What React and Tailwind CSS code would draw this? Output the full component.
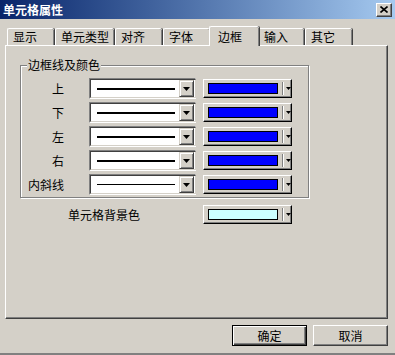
import React from "react";

const font = { fontFamily: '"Noto Sans CJK SC", "DejaVu Sans", sans-serif' };

function Arrow() {
  return (
    <svg width="7" height="4" viewBox="0 0 7 4" aria-hidden="true">
      <path d="M0 0h7L3.5 4z" fill="#000" />
    </svg>
  );
}

function LineCombo({ thin = false }) {
  return (
    <div className="flex h-[21px] w-[107px] border border-t-[#808080] border-l-[#808080] border-r-white border-b-white">
      <div className="flex flex-1 items-center border border-t-[#404040] border-l-[#404040] border-r-[#d4d0c8] border-b-[#d4d0c8] bg-white pr-[1px]">
        <div className="flex flex-1 items-center pl-[6px] pr-[4px]">
          <div className={thin ? "h-[1px] w-[78px] bg-black" : "h-[2px] w-[78px] bg-black"} />
        </div>
        <div className="flex h-[17px] w-[15px] items-center justify-center border border-t-[#d4d0c8] border-l-[#d4d0c8] border-r-[#404040] border-b-[#404040] bg-[#d4d0c8] shadow-[inset_1px_1px_0_#fff,inset_-1px_-1px_0_#808080]">
          <Arrow />
        </div>
      </div>
    </div>
  );
}

function ColorCombo({ color }) {
  return (
    <div className="flex h-[19px] w-[89px] items-center border border-t-white border-l-white border-r-black border-b-black bg-[#d4d0c8] shadow-[inset_-1px_-1px_0_#808080]">
      <div className={`ml-[4px] h-[11px] w-[70px] border border-black ${color}`} />
      <div className="ml-[4px] h-[13px] w-[2px] border-l border-r border-l-[#808080] border-r-white" />
      <div className="ml-[2px] flex items-center">
        <svg width="5" height="3" viewBox="0 0 5 3" aria-hidden="true">
          <path d="M0 0h5L2.5 3z" fill="#000" />
        </svg>
      </div>
    </div>
  );
}

function Tab({ label, width, active = false }) {
  if (active) {
    return (
      <div
        className={`relative z-10 -ml-[2px] -mr-[1px] -mb-[1px] flex h-[20px] items-start rounded-tl-[2px] rounded-tr-[2px] border-t border-l border-t-white border-l-white bg-[#d4d0c8] pl-[8px] pt-[2px] shadow-[1px_0_0_#404040,inset_-1px_0_0_#808080] ${width}`}
      >
        <span className="text-[12px] leading-[16px] text-black">{label}</span>
      </div>
    );
  }
  return (
    <div
      className={`mr-[1px] flex h-[17px] items-start rounded-tl-[2px] rounded-tr-[2px] border-t border-l border-t-white border-l-white bg-[#d4d0c8] pl-[5px] shadow-[1px_0_0_#404040,inset_-1px_0_0_#808080] ${width}`}
    >
      <span className="text-[12px] leading-[16px] text-black">{label}</span>
    </div>
  );
}

function Button({ label, primary = false }) {
  return (
    <div
      className={
        primary
          ? "flex h-[21px] w-[75px] items-center justify-center border border-black bg-[#d4d0c8] shadow-[inset_1px_1px_0_#fff,inset_-1px_-1px_0_#404040,inset_-2px_-2px_0_#808080]"
          : "flex h-[21px] w-[75px] items-center justify-center border border-t-white border-l-white border-r-[#404040] border-b-[#404040] bg-[#d4d0c8] shadow-[inset_-1px_-1px_0_#808080]"
      }
    >
      <span className="text-[12px] leading-[14px] text-black">{label}</span>
    </div>
  );
}

const rows = [
  { label: "上" },
  { label: "下" },
  { label: "左" },
  { label: "右" },
  { label: "内斜线", thin: true },
];

export default function App() {
  return (
    <div className="flex h-[355px] w-[395px] flex-col overflow-hidden bg-[#d4d0c8]" style={font}>
      {/* Title bar */}
      <div className="flex h-[19px] items-center justify-between bg-gradient-to-r from-[#0a246a] to-[#a6caf0] pl-[3px] pr-[3px]">
        <span className="text-[12px] font-bold leading-[14px] text-white">单元格属性</span>
        <div className="flex h-[14px] w-[16px] items-center justify-center border border-t-white border-l-white border-r-[#404040] border-b-[#404040] bg-[#d4d0c8] shadow-[inset_-1px_-1px_0_#808080]">
          <svg width="8" height="7" viewBox="0 0 8 7" aria-hidden="true">
            <path d="M0.5 0.5L7.5 6.5M7.5 0.5L0.5 6.5" stroke="#000" strokeWidth="1.6" />
          </svg>
        </div>
      </div>

      {/* Tabs */}
      <div className="ml-[7px] mt-[7px] flex h-[19px] items-end">
        <Tab label="显示" width="w-[47px]" />
        <Tab label="单元类型" width="w-[59px]" />
        <Tab label="对齐" width="w-[47px]" />
        <Tab label="字体" width="w-[47px]" />
        <Tab label="边框" width="w-[50px]" active />
        <Tab label="输入" width="w-[46px]" />
        <Tab label="其它" width="w-[47px]" />
      </div>

      {/* Panel */}
      <div className="ml-[5px] h-[274px] w-[383px] border border-t-white border-l-white border-r-[#404040] border-b-[#404040] shadow-[inset_-1px_-1px_0_#808080]">
        <div className="relative ml-[14px] mt-[19px] h-[133px] w-[289px] border border-[#808080] shadow-[inset_1px_1px_0_#fff,1px_1px_0_#fff]">
          <span className="absolute -top-[9px] left-[6px] bg-[#d4d0c8] px-[1px] text-[12px] leading-[16px] text-black">
            边框线及颜色
          </span>
          <div className="mt-[12px] flex flex-col gap-[3px]">
            {rows.map((r) => (
              <div key={r.label} className="flex items-center">
                <div className="w-[43px] text-right text-[12px] leading-[14px] text-black">{r.label}</div>
                <div className="ml-[25px]">
                  <LineCombo thin={r.thin} />
                </div>
                <div className="ml-[7px]">
                  <ColorCombo color="bg-[#0000ff]" />
                </div>
              </div>
            ))}
          </div>
        </div>

        <div className="mt-[7px] flex items-center">
          <div className="ml-[62px] w-[72px] text-[12px] leading-[14px] text-black">单元格背景色</div>
          <div className="ml-[63px]">
            <ColorCombo color="bg-[#ccffff]" />
          </div>
        </div>
      </div>

      {/* Buttons */}
      <div className="mt-[6px] flex justify-end gap-[6px] pr-[7px]">
        <Button label="确定" primary />
        <Button label="取消" />
      </div>

      <div className="mt-auto h-[2px] bg-[#808080]" />
    </div>
  );
}
